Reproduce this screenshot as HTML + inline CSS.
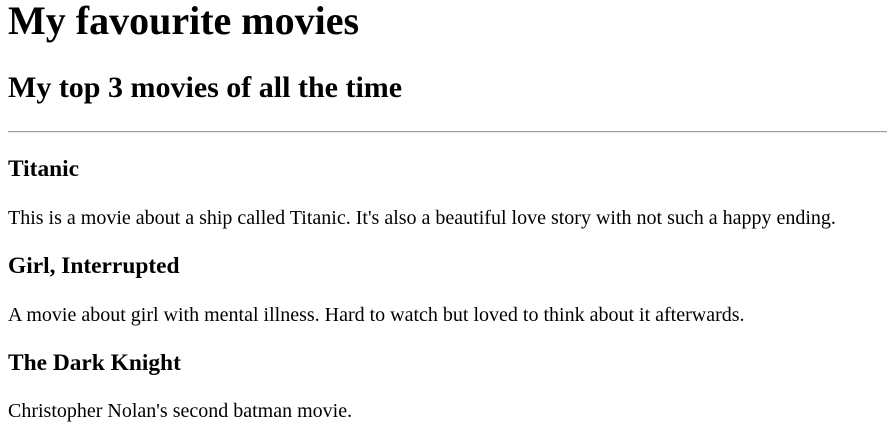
<!DOCTYPE html>
<html><head><meta charset="utf-8"><style>
html,body{margin:0;padding:0;background:#fff;}
body{padding:0 0 0 8px;font-family:"Liberation Serif",serif;font-size:20px;color:#000;}
h1{font-size:40px;margin:0 0 29px;line-height:42px;}
h2{font-size:30px;margin:24px 0;line-height:34px;}
h3{font-size:23.4px;margin:23.4px 0;line-height:27px;}
p{margin:20px 0;line-height:23px;}
hr{margin:26px 0 10px;border:0;border-top:1px solid #9a9a9a;border-bottom:1px solid #eee;height:0;}
</style></head><body>
<h1>My favourite movies</h1>
<h2>My top 3 movies of all the time</h2>
<hr>
<h3>Titanic</h3>
<p>This is a movie about a ship called Titanic. It's also a beautiful love story with not such a happy ending.</p>
<h3>Girl, Interrupted</h3>
<p>A movie about girl with mental illness. Hard to watch but loved to think about it afterwards.</p>
<h3>The Dark Knight</h3>
<p>Christopher Nolan's second batman movie.</p>
</body></html>
